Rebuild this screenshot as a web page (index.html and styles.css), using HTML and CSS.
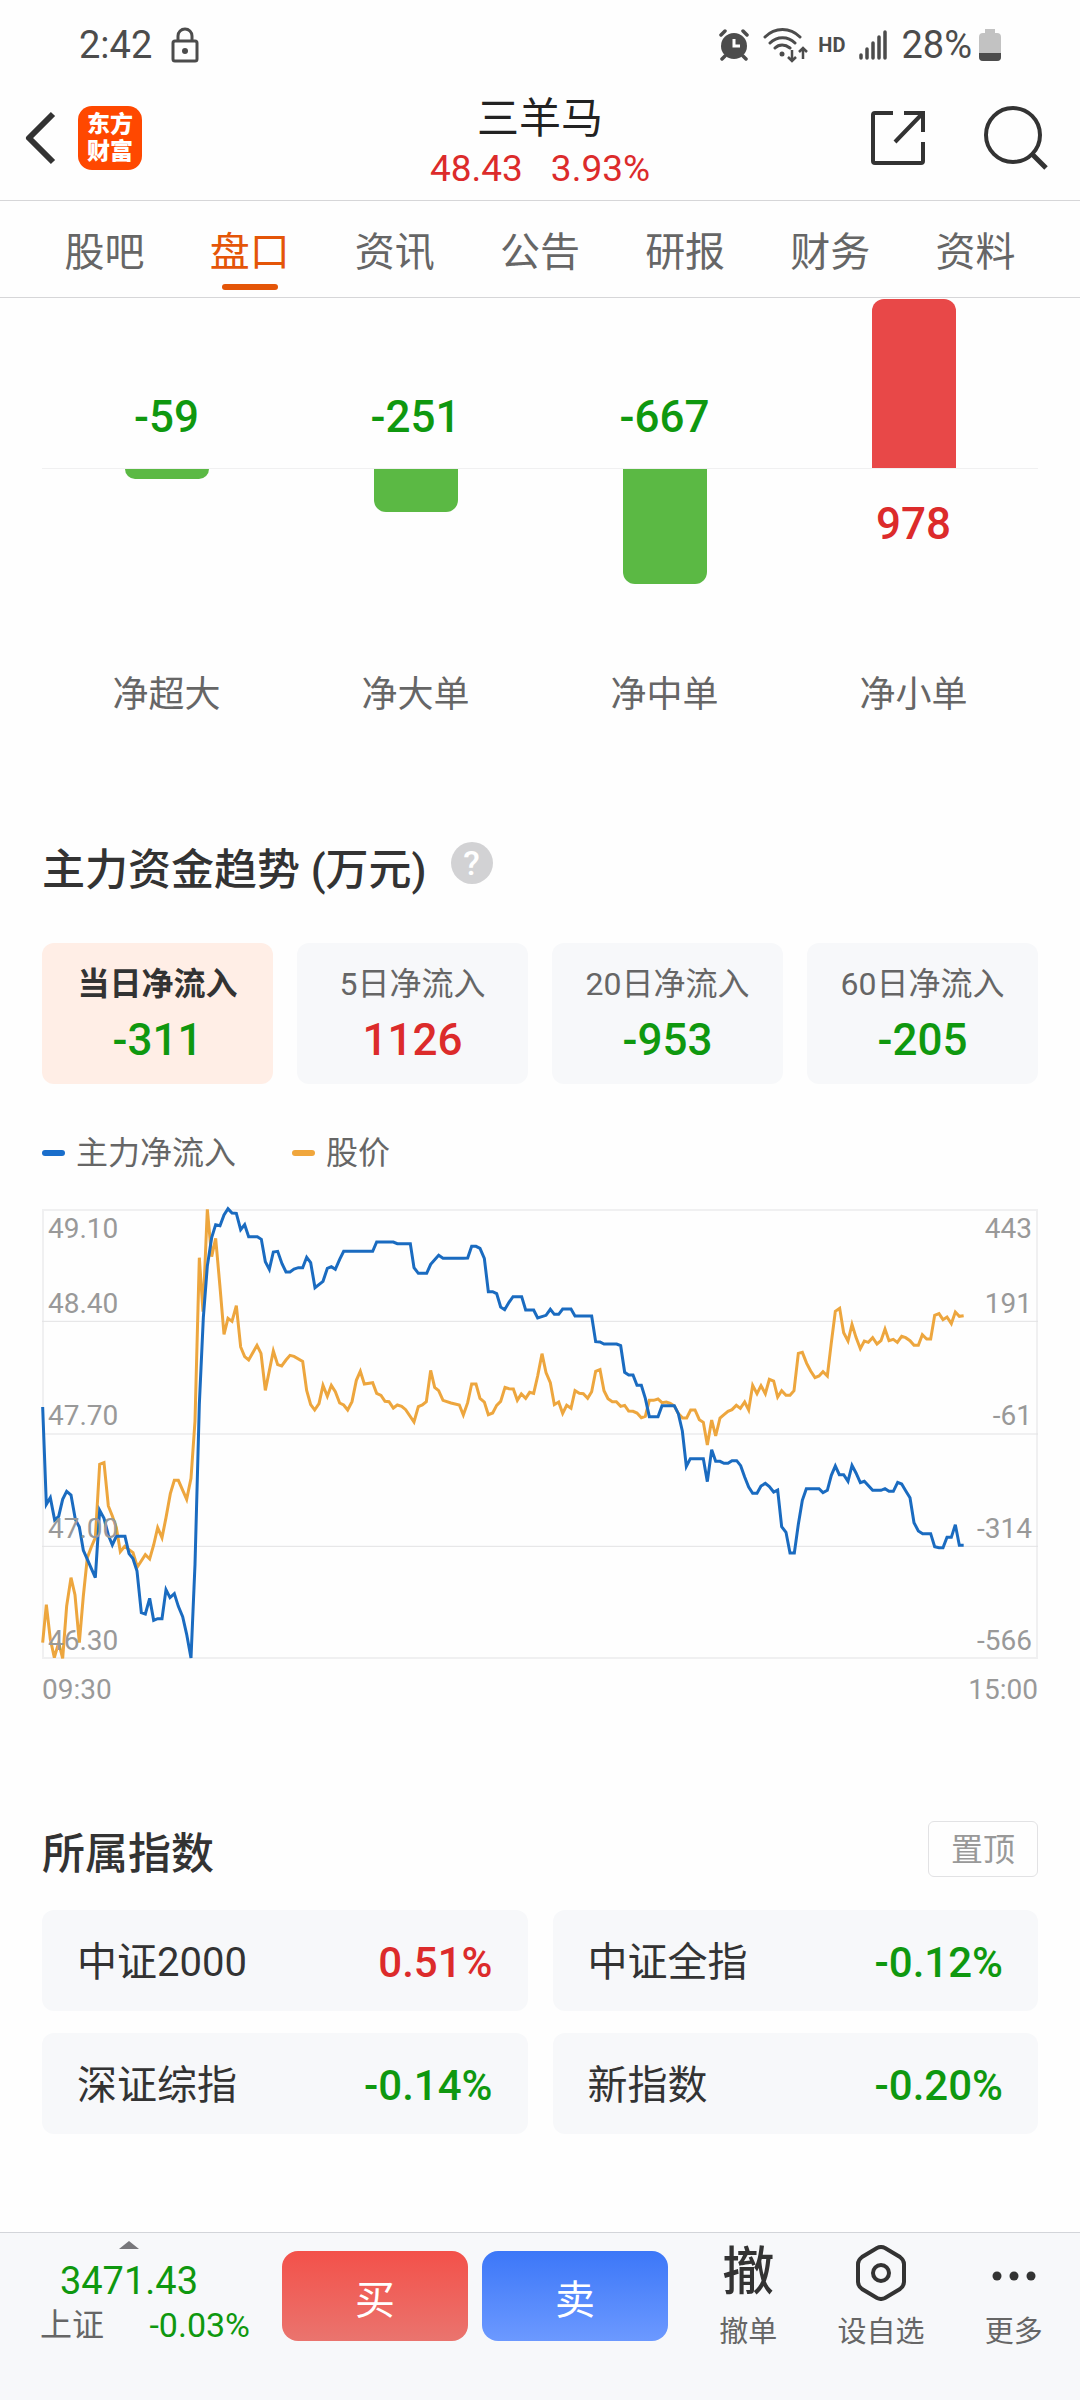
FILE: index.html
```
<!DOCTYPE html>
<html lang="zh-CN">
<head>
	<meta charset="UTF-8">
	<meta name="viewport" content="width=device-width, initial-scale=1.0">
	<title>三羊马 - 盘口</title>

	<link rel="stylesheet" href="styles.css">
</head>
<body>
	<!-- status bar -->
	<div class="status">
		<span>2:42</span>
		<svg class="status-lock" width="28" height="36" viewBox="0 0 28 36" fill="none" stroke="#4c4c4c" stroke-width="3">
			<rect x="2" y="14" width="24" height="20" rx="2"/>
			<path d="M7 14V9a7 7 0 0 1 14 0v5"/>
			<circle cx="14" cy="24" r="3" fill="#4c4c4c" stroke="none"/>
		</svg>
		<div class="status-right">
			<svg width="30" height="32" viewBox="0 0 30 32" fill="none" stroke="#4c4c4c" stroke-width="3.5" stroke-linecap="round">
				<circle cx="15" cy="17" r="13" fill="#4c4c4c" stroke="none"/>
				<path d="M2 6l4-4M28 6l-4-4M6 27l-3 3M24 27l3 3"/>
				<path d="M15 10v7h6" stroke="#fff" stroke-width="3" stroke-linecap="butt"/>
			</svg>
			<svg class="status-wifi" width="45" height="36" viewBox="0 0 45 36" fill="none" stroke="#4c4c4c" stroke-width="3" stroke-linecap="round">
				<path d="M2 10C12 0 27 0 37 10M7 16c7-7 18-7 25 0M12 21c4-4 10-4 15 0"/>
				<circle cx="19" cy="27" r="2.5" fill="#4c4c4c" stroke="none"/>
				<path d="M29 23v10M25 30l4 4 4-4M40 32V21M36 25l4-4 4 4" stroke-width="2.5" stroke-linecap="butt"/>
			</svg>
			<b class="status-hd">HD</b>
			<svg class="status-signal" width="28" height="32" viewBox="0 0 28 32" fill="none" stroke="#4c4c4c" stroke-width="3.5" stroke-linecap="round">
				<path d="M2 26v3M8 20v9M14 14v15M20 8v21M26 3v26"/>
			</svg>
			<span>28%</span>
			<svg class="status-battery" width="22" height="34" viewBox="0 0 22 34">
				<path d="M6 1h10v4h2q4 0 4 4v20q0 4-4 4H4q-4 0-4-4V9q0-4 4-4h2z" fill="#c2c2c2"/>
				<path d="M0 25h22v4q0 4-4 4H4q-4 0-4-4z" fill="#4c4c4c"/>
			</svg>
		</div>
	</div>

	<!-- header -->
	<header class="header">
		<div class="header-side">
			<button class="icon-btn" type="button" aria-label="返回">
				<svg width="32" height="56" viewBox="0 0 32 56" fill="none" stroke="#333" stroke-width="6">
					<path d="M29 4L5 28l24 24" stroke-linejoin="round"/>
				</svg>
			</button>
			<a class="logo" href="#">东方<br>财富</a>
		</div>
		<div class="header-title">
			<h1>三羊马</h1>
			<p class="quote up"><span>48.43</span><span>3.93%</span></p>
		</div>
		<div class="header-side header-actions">
			<button class="icon-btn" type="button" aria-label="分享">
				<svg width="56" height="56" viewBox="0 0 56 56" fill="none" stroke="#333" stroke-width="4">
					<path d="M23 3H5q-2 0-2 2v46q0 2 2 2h46q2 0 2-2V32"/>
					<path d="M34 3h19v19M52 4L25 32"/>
				</svg>
			</button>
			<button class="icon-btn" type="button" aria-label="搜索">
				<svg width="64" height="64" viewBox="0 0 64 64" fill="none" stroke="#333" stroke-width="4">
					<circle cx="29" cy="29" r="27"/>
					<path d="M49 49l13 13" stroke-width="5"/>
				</svg>
			</button>
		</div>
	</header>

	<nav class="tabs">
		<a href="#">股吧</a>
		<a class="active" href="#">盘口</a>
		<a href="#">资讯</a>
		<a href="#">公告</a>
		<a href="#">研报</a>
		<a href="#">财务</a>
		<a href="#">资料</a>
	</nav>

	<main class="content">
		<!-- net orders by size -->
		<section class="orders">
			<div class="order">
				<div class="order-top"><span class="order-num down">-59</span></div>
				<div class="order-bottom"><i class="bar bar-down" style="height: 10px"></i></div>
				<span class="order-name">净超大</span>
			</div>
			<div class="order">
				<div class="order-top"><span class="order-num down">-251</span></div>
				<div class="order-bottom"><i class="bar bar-down" style="height: 43px"></i></div>
				<span class="order-name">净大单</span>
			</div>
			<div class="order">
				<div class="order-top"><span class="order-num down">-667</span></div>
				<div class="order-bottom"><i class="bar bar-down" style="height: 115px"></i></div>
				<span class="order-name">净中单</span>
			</div>
			<div class="order">
				<div class="order-top"><i class="bar bar-up" style="height: 169px"></i></div>
				<div class="order-bottom"><span class="order-num up">978</span></div>
				<span class="order-name">净小单</span>
			</div>
		</section>

		<!-- capital trend -->
		<section class="trend">
			<div class="trend-head">
				<h2>主力资金趋势 (万元)</h2>
				<button class="help" type="button" aria-label="说明">?</button>
			</div>

			<div class="periods">
				<button class="period active" type="button"><span>当日净流入</span><b class="down">-311</b></button>
				<button class="period" type="button"><span>5日净流入</span><b class="up">1126</b></button>
				<button class="period" type="button"><span>20日净流入</span><b class="down">-953</b></button>
				<button class="period" type="button"><span>60日净流入</span><b class="down">-205</b></button>
			</div>

			<div class="legend">
				<span class="legend-item flow">主力净流入</span>
				<span class="legend-item price">股价</span>
			</div>

			<div class="chart">
				<svg class="chart-plot" viewBox="36 54 2988 1350" preserveAspectRatio="none" fill="none">
					<path class="grid-line" d="M36 391H3024M36 729H3024M36 1066H3024"/>
					<polyline class="line-price" points="38,1355 49,1241 61,1345 73,1400 86,1355 98,1402 110,1245 123,1160 135,1212 148,1355 160,1215 172,1100 184,1068 196,1040 209,820 222,815 235,945 247,975 259,1010 271,1082 284,1066 309,1085 322,1128 346,1091 359,1104 371,1062 383,1010 396,1040 408,980 421,908 433,868 445,868 470,925 483,862 495,690 508,200 519,362 532,55 545,197 557,142 570,288 582,430 594,382 606,391 619,344 632,468 644,497 656,507 681,463 693,487 706,598 730,480 743,521 755,525 768,507 780,493 792,496 818,511 830,598 842,641 854,657 867,638 879,583 892,616 904,583 916,602 929,636 941,642 953,657 966,632 979,568 991,541 1003,579 1028,575 1040,607 1053,613 1065,631 1077,632 1090,651 1102,642 1115,646 1127,656 1152,693 1165,647 1177,642 1189,632 1202,538 1214,589 1226,599 1239,628 1263,636 1288,642 1300,672 1313,635 1325,579 1338,579 1350,622 1363,633 1375,671 1388,666 1400,643 1412,631 1425,589 1437,593 1450,594 1462,628 1474,609 1487,622 1499,604 1511,607 1523,555 1536,488 1548,545 1561,575 1573,641 1586,633 1598,667 1610,643 1623,652 1635,599 1648,607 1660,608 1673,622 1685,602 1697,541 1710,536 1722,599 1734,623 1747,632 1759,632 1772,646 1784,643 1796,660 1809,661 1821,666 1834,680 1846,676 1858,628 1871,628 1884,624 1896,635 1909,633 1921,637 1933,645 1945,668 1958,681 1970,681 1982,657 1995,657 2008,686 2020,694 2032,762 2045,687 2057,735 2070,681 2082,671 2094,661 2106,656 2119,643 2131,652 2144,633 2156,657 2168,583 2181,608 2193,584 2206,608 2218,565 2231,570 2243,618 2255,599 2268,613 2280,613 2292,599 2305,487 2317,484 2330,517 2342,540 2355,560 2367,555 2379,542 2392,555 2404,455 2416,361 2429,352 2441,425 2454,450 2466,400 2478,439 2491,473 2503,450 2515,454 2528,440 2541,459 2553,449 2565,414 2577,449 2590,445 2602,454 2615,436 2627,440 2640,449 2652,463 2665,463 2677,431 2690,444 2702,444 2714,373 2727,368 2739,386 2751,378 2764,398 2776,363 2788,376 2801,374"/>
					<polyline class="line-flow" points="38,648 49,940 61,920 74,987 86,976 98,925 110,901 123,912 136,985 148,1008 160,1078 172,1105 196,1160 209,958 222,982 235,1032 247,1062 259,1036 285,1036 297,1088 309,1103 321,1140 334,1265 346,1269 359,1222 371,1288 383,1283 396,1283 408,1196 420,1220 433,1208 445,1246 458,1277 470,1330 483,1401 495,1120 508,640 520,380 532,225 545,140 557,101 570,104 582,72 594,53 606,66 619,67 632,116 644,101 656,137 682,137 694,145 706,212 718,235 730,183 743,181 756,218 768,243 780,243 792,234 805,230 818,230 830,199 842,215 855,290 879,271 892,232 904,227 916,235 929,205 941,181 1028,181 1040,153 1090,153 1102,158 1141,158 1152,230 1165,247 1190,247 1202,220 1226,193 1239,202 1300,202 1313,201 1325,166 1338,166 1350,172 1363,202 1375,302 1388,302 1400,308 1412,348 1424,356 1437,334 1449,317 1475,317 1487,357 1511,357 1523,381 1548,373 1561,355 1573,370 1586,370 1598,354 1623,354 1635,375 1685,375 1697,452 1710,453 1722,459 1760,459 1772,464 1784,544 1796,552 1809,552 1821,583 1834,583 1846,622 1858,677 1884,677 1896,644 1933,644 1945,668 1957,720 1969,826 1981,803 2020,803 2032,872 2045,776 2057,811 2070,811 2082,817 2094,817 2106,809 2120,809 2132,824 2144,858 2156,888 2168,907 2181,907 2193,885 2206,877 2218,887 2231,903 2243,897 2255,1007 2268,1024 2280,1086 2293,1086 2305,1000 2317,928 2329,893 2367,893 2379,905 2392,898 2404,853 2416,825 2428,851 2441,851 2454,871 2466,823 2478,846 2491,875 2503,871 2528,898 2553,898 2565,893 2577,901 2590,901 2603,874 2615,879 2627,899 2640,920 2652,995 2665,1020 2678,1028 2702,1028 2714,1067 2727,1070 2739,1070 2751,1039 2764,1039 2776,1001 2788,1063 2801,1063"/>
				</svg>
				<div class="chart-labels">
					<span>49.10</span><span>443</span>
					<span>48.40</span><span>191</span>
					<span>47.70</span><span>-61</span>
					<span>47.00</span><span>-314</span>
					<span>46.30</span><span>-566</span>
				</div>
			</div>
			<div class="chart-times"><span>09:30</span><span>15:00</span></div>
		</section>

		<!-- related indexes -->
		<section class="indexes">
			<div class="indexes-head">
				<h2>所属指数</h2>
				<button class="pin" type="button">置顶</button>
			</div>
			<div class="indexes-list">
				<a class="index-card" href="#"><span>中证2000</span><b class="up">0.51%</b></a>
				<a class="index-card" href="#"><span>中证全指</span><b class="down">-0.12%</b></a>
				<a class="index-card" href="#"><span>深证综指</span><b class="down">-0.14%</b></a>
				<a class="index-card" href="#"><span>新指数</span><b class="down">-0.20%</b></a>
			</div>
		</section>
	</main>

	<!-- bottom bar -->
	<footer class="footer">
		<a class="market" href="#">
			<svg width="20" height="8" viewBox="0 0 20 8"><path d="M10 0l10 8H0z" fill="#77777b"/></svg>
			<span class="market-value down">3471.43</span>
			<span class="market-row"><span>上证</span><span class="market-change down">-0.03%</span></span>
		</a>
		<button class="trade buy" type="button">买</button>
		<button class="trade sell" type="button">卖</button>
		<div class="tools">
			<button class="tool" type="button">
				<span class="tool-icon" aria-hidden="true">撤</span>
				<span>撤单</span>
			</button>
			<button class="tool" type="button">
				<span class="tool-icon">
					<svg width="50" height="56" viewBox="0 0 50 56" fill="none" stroke="#333" stroke-width="4">
						<path d="M21 3q4-2 8 0l15 9q4 3 4 7v18q0 4-4 7l-15 9q-4 2-8 0l-15-9q-4-3-4-7V19q0-4 4-7z"/>
						<circle cx="25" cy="28" r="8"/>
					</svg>
				</span>
				<span>设自选</span>
			</button>
			<button class="tool" type="button">
				<span class="tool-icon">
					<svg width="44" height="50" viewBox="0 0 44 50" fill="#333">
						<circle cx="5" cy="28" r="4.5"/><circle cx="22" cy="28" r="4.5"/><circle cx="39" cy="28" r="4.5"/>
					</svg>
				</span>
				<span>更多</span>
			</button>
		</div>
	</footer>
</body>
</html>
```
FILE: styles.css
```
*,
*::before,
*::after {
	margin: 0;
	padding: 0;
	box-sizing: border-box;
}

:root {
	--up: #dc2b2b;
	--down: #0f980f;
	--text: #333;
	--text-secondary: #666;
	--text-muted: #999;
	--accent: #e45508;
	--card: #f7f8fa;
	--grid: #f0f0f1;
}

body {
	min-height: 100vh;
	display: flex;
	flex-direction: column;
	background: #fefefe;
	color: var(--text);
	font-family: Roboto, "Noto Sans CJK SC", sans-serif;
	font-size: 32px;
	line-height: 40px;
}

a {
	color: inherit;
	text-decoration: none;
}

button {
	border: 0;
	background: none;
	color: inherit;
	font: inherit;
	cursor: pointer;
}

svg {
	display: block;
}

h2 {
	font-size: 43px;
	font-weight: 500;
	line-height: 56px;
}

.up {
	color: var(--up);
}

.down {
	color: var(--down);
}

/* status bar */
.status {
	display: flex;
	align-items: center;
	height: 90px;
	padding: 0 79px;
	color: #4c4c4c;
	font-size: 38px;
}

.status-lock {
	margin-left: 19px;
}

.status-right {
	display: flex;
	align-items: center;
	margin-left: auto;
}

.status-wifi {
	margin-left: 14px;
}

.status-hd {
	margin: 0 14px 0 10px;
	font-size: 20px;
}

.status-signal {
	margin-right: 14px;
}

.status-battery {
	margin-left: 7px;
}

/**
* Header
*/
.header {
	display: grid;
	grid-template-columns: 1fr auto 1fr;
	height: 111px;
	padding: 0 24px;
	border-bottom: 1px solid #d6d6d8;
}

.header-side {
	display: flex;
	align-items: center;
	gap: 22px;
	height: 96px;
}

.header-actions {
	justify-content: flex-end;
	gap: 58px;
	padding-right: 8px;
}

.logo {
	width: 64px;
	height: 64px;
	padding-top: 5px;
	border-radius: 14px;
	background: #ff4800;
	color: #fff;
	font-size: 23px;
	font-weight: 900;
	line-height: 27px;
	text-align: center;
}

.header-title {
	text-align: center;
}

.header-title h1 {
	color: #222;
	font-size: 42px;
	font-weight: 400;
	line-height: 58px;
}

.quote {
	display: flex;
	gap: 28px;
	font-size: 37px;
	line-height: 42px;
}

/* tabs */
.tabs {
	display: grid;
	grid-template-columns: repeat(7, 1fr);
	height: 97px;
	padding: 0 32px;
	border-bottom: 1px solid #d6d6d8;
	color: var(--text-secondary);
	font-size: 40px;
}

.tabs a {
	display: flex;
	flex-direction: column;
	align-items: center;
	justify-content: space-between;
	padding: 22px 0 7px;
	line-height: 60px;
}

.tabs .active {
	color: var(--accent);
}

.tabs .active::after {
	content: "";
	width: 56px;
	height: 6px;
	border-radius: 3px;
	background: var(--accent);
}

.content {
	padding: 0 42px;
}

/**
* Net orders
*/
.orders {
	display: grid;
	grid-template-columns: repeat(4, 1fr);
}

.order {
	display: flex;
	flex-direction: column;
	align-items: center;
}

.order-top,
.order-bottom {
	display: flex;
	flex-direction: column;
	align-items: center;
	width: 100%;
}

.order-top {
	justify-content: flex-end;
	height: 170px;
}

.order-bottom {
	height: 200px;
	border-top: 1px solid var(--grid);
}

.bar {
	width: 84px;
}

.bar-up {
	border-radius: 12px 12px 0 0;
	background: #e84848;
}

.bar-down {
	border-radius: 0 0 12px 12px;
	background: #5bb944;
}

.order-num {
	padding: 28px 0;
	font-size: 44px;
	font-weight: 500;
	line-height: 54px;
}

.order-top .order-num {
	padding: 24px 0;
}

.order-name {
	color: var(--text-secondary);
	font-size: 36px;
	line-height: 54px;
}

/**
* Capital trend
*/
.trend {
	padding-top: 120px;
}

.trend-head {
	display: flex;
	gap: 24px;
}

.help {
	width: 42px;
	height: 42px;
	border-radius: 50%;
	background: #d2d2d4;
	color: #fff;
	font-size: 34px;
	font-weight: 500;
	line-height: 42px;
}

.periods {
	display: grid;
	grid-template-columns: repeat(4, 1fr);
	gap: 24px;
	margin-top: 45px;
}

.period {
	display: flex;
	flex-direction: column;
	align-items: center;
	gap: 8px;
	padding: 20px 0 17px;
	border-radius: 12px;
	background: var(--card);
	color: var(--text-secondary);
	line-height: 42px;
}

.period b {
	font-size: 44px;
	font-weight: 500;
	line-height: 54px;
}

.period.active {
	background: #ffeee6;
}

.period.active span {
	color: var(--text);
	font-weight: 700;
}

.legend {
	display: flex;
	gap: 56px;
	margin-top: 49px;
	color: var(--text-secondary);
}

.legend-item {
	display: flex;
	align-items: center;
	gap: 11px;
}

.legend-item::before {
	content: "";
	width: 23px;
	height: 6px;
	border-radius: 3px;
}

.flow::before {
	background: #1a6ecb;
}

.price::before {
	background: #f0a63c;
}

/* plot and labels share one grid cell */
.chart {
	display: grid;
	height: 450px;
	margin-top: 36px;
}

.chart-plot,
.chart-labels {
	grid-area: 1 / 1;
	width: 100%;
	height: 450px;
}

.chart-plot {
	overflow: visible;
	box-shadow: inset 0 0 0 2px var(--grid);
}

.chart-plot * {
	vector-effect: non-scaling-stroke;
}

.grid-line {
	stroke: #e2e2e4;
	stroke-width: 1px;
}

.line-price {
	stroke: #eda63e;
	stroke-width: 3px;
}

.line-flow {
	stroke: #1a6bc0;
	stroke-width: 3px;
}

.chart-labels {
	display: grid;
	grid-template-columns: 1fr auto;
	grid-template-rows: 1fr 2fr 3fr 3fr 3fr;
	align-items: end;
	padding: 0 6px;
	color: var(--text-muted);
	font-size: 28px;
	line-height: 36px;
}

.chart-labels span:nth-child(even) {
	text-align: right;
}

.chart-times {
	display: flex;
	justify-content: space-between;
	margin-top: 13px;
	color: var(--text-muted);
	font-size: 28px;
	line-height: 36px;
}

/**
* Related indexes
*/
.indexes {
	padding-top: 113px;
}

.indexes-head {
	display: flex;
	align-items: flex-start;
	justify-content: space-between;
	height: 89px;
}

.indexes-head h2 {
	margin-top: 5px;
}

.pin {
	width: 110px;
	height: 56px;
	padding-top: 2px;
	border: 1px solid #e2e2e4;
	border-radius: 6px;
	color: var(--text-muted);
}

.indexes-list {
	display: grid;
	grid-template-columns: 1fr 1fr;
	gap: 22px 25px;
	padding-bottom: 60px;
}

.index-card {
	display: flex;
	align-items: center;
	justify-content: space-between;
	height: 101px;
	padding: 4px 35px 0;
	border-radius: 12px;
	background: var(--card);
	font-size: 40px;
	line-height: 58px;
}

.index-card b {
	font-size: 42px;
	font-weight: 500;
}

/**
* Bottom bar
*/
.footer {
	position: sticky;
	bottom: 0;
	display: grid;
	grid-template-columns: 268px 1fr 1fr 398px;
	gap: 14px;
	height: 168px;
	margin-top: auto;
	border-top: 1px solid #d3d5da;
	background: var(--card);
}

.market {
	display: flex;
	flex-direction: column;
	align-items: center;
	padding: 8px 18px 0 40px;
	color: var(--text-secondary);
	line-height: 44px;
}

.market svg {
	margin-right: 32px;
}

.market-value {
	margin: 10px 32px 0 0;
	font-size: 38px;
}

.market-row {
	display: flex;
	justify-content: space-between;
	width: 100%;
}

.market-change {
	font-size: 34px;
}

.trade {
	height: 90px;
	margin-top: 18px;
	padding-top: 10px;
	border-radius: 16px;
	color: #fff;
	font-size: 40px;
}

.buy {
	background: linear-gradient(#f3514a, #ea746e);
}

.sell {
	background: linear-gradient(#3c77f8, #6c99ff);
}

.tools {
	display: grid;
	grid-template-columns: repeat(3, 1fr);
}

.tool {
	display: flex;
	flex-direction: column;
	align-items: center;
	padding-top: 12px;
	color: var(--text-secondary);
	font-size: 29px;
}

.tool-icon {
	display: flex;
	align-items: center;
	height: 56px;
	margin-bottom: 11px;
	color: var(--text);
	font-size: 52px;
	font-weight: 500;
	line-height: 60px;
}
```
